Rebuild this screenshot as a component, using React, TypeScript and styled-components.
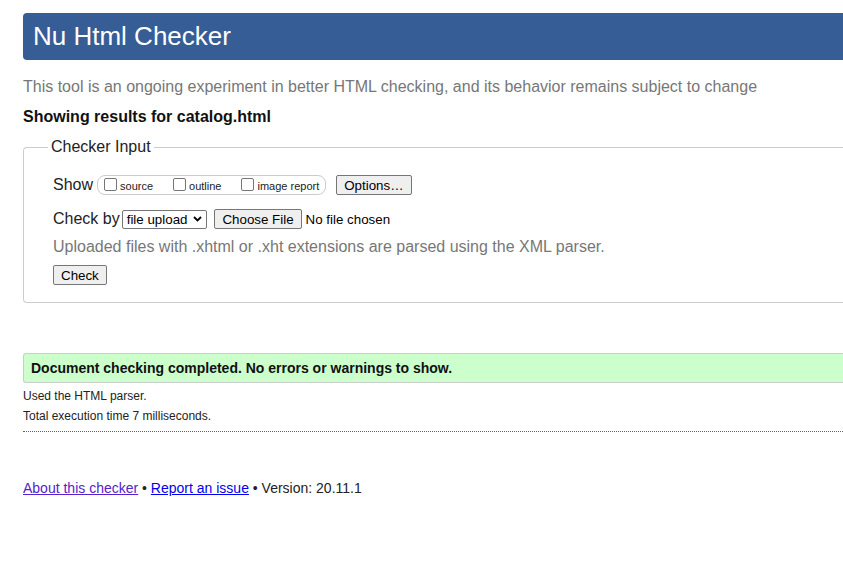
import React from "react";
import styled, { createGlobalStyle } from "styled-components";

const Global = createGlobalStyle`
  html, body { margin: 0; padding: 0; background: #fff; overflow: hidden; }
  body { font-family: "Liberation Sans", Arial, sans-serif; color: #222; }
`;

const Page = styled.div`
  width: 1000px;
  padding-left: 23px;
  padding-top: 13px;
`;

const Header = styled.h1`
  margin: 0;
  height: 47px;
  line-height: 46px;
  padding-left: 10px;
  background: #365d95;
  color: #fff;
  font-size: 26px;
  font-weight: normal;
  border-radius: 4px 0 0 4px;
`;

const Intro = styled.p`
  margin: 17px 0 0;
  font-size: 16px;
  line-height: 20px;
  color: #777;
`;

const Showing = styled.p`
  margin: 10px 0 0;
  font-size: 16px;
  line-height: 20px;
  font-weight: bold;
  color: #111;
`;

const Fieldset = styled.fieldset`
  margin: 11px 0 0;
  padding: 6px 0 17px 29px;
  border: 1px solid #ccc;
  border-right: none;
  border-radius: 4px 0 0 4px;
`;

const Legend = styled.legend`
  margin-left: -5px;
  padding: 0 3px;
  font-size: 16px;
  line-height: 18px;
  color: #222;
`;

const Row = styled.div<{ $mt?: number }>`
  display: flex;
  align-items: center;
  margin-top: ${(p) => p.$mt ?? 0}px;
  font-size: 16px;
  color: #222;
`;

const Pill = styled.span`
  display: inline-flex;
  align-items: center;
  height: 18px;
  margin-left: 4px;
  padding: 0 6px 0 6px;
  border: 1px solid #ccc;
  border-radius: 8px;
  gap: 20px;
`;

const CheckLabel = styled.label`
  display: inline-flex;
  align-items: flex-end;
  font-size: 11px;
  line-height: 12px;
  color: #222;
`;

const Box = styled.span`
  display: inline-block;
  width: 11px;
  height: 11px;
  border: 1px solid #767676;
  border-radius: 2px;
  margin-right: 3px;
  margin-bottom: 1px;
  background: #fff;
`;

const Button = styled.button<{ $ml?: number }>`
  margin: 0 0 0 ${(p) => p.$ml ?? 0}px;
  height: 20px;
  padding: 0 7px;
  font-family: "Liberation Sans", Arial, sans-serif;
  font-size: 13.33px;
  color: #000;
  background: #efefef;
  border: 1px solid #767676;
  border-radius: 2px;
`;

const Select = styled.span`
  display: inline-flex;
  align-items: center;
  margin-left: 2px;
  height: 17px;
  padding: 0 4px 0 4px;
  border: 1px solid #767676;
  border-radius: 2px;
  font-size: 13.33px;
  color: #000;
  gap: 6px;
`;

const FileNote = styled.span`
  margin-left: 4px;
  font-size: 13.33px;
  color: #000;
`;

const Hint = styled.p`
  margin: 8px 0 0;
  font-size: 16px;
  line-height: 20px;
  color: #777;
`;

const Success = styled.div`
  margin-top: 50px;
  height: 28px;
  line-height: 28px;
  padding-left: 7px;
  background: #ccffcc;
  border: 1px solid #ccc;
  border-right: none;
  border-radius: 3px 0 0 3px;
  font-size: 14px;
  font-weight: bold;
  color: #111;
`;

const Small = styled.p<{ $mt: number }>`
  margin: ${(p) => p.$mt}px 0 0;
  font-size: 12px;
  line-height: 14px;
  color: #222;
`;

const Rule = styled.hr`
  margin: 8px 0 0;
  border: none;
  border-top: 1px dotted #666;
`;

const Footer = styled.p`
  margin: 48px 0 0;
  font-size: 14px;
  line-height: 16px;
  color: #222;
`;

const Link = styled.a<{ $visited?: boolean }>`
  color: ${(p) => (p.$visited ? "#5522cc" : "#0000ee")};
  text-decoration: underline;
`;

const Chevron = () => (
  <svg width="9" height="6" viewBox="0 0 9 6">
    <path d="M1 1 L4.5 4.5 L8 1" stroke="#000" strokeWidth="1.8" fill="none" />
  </svg>
);

export default function App() {
  return (
    <>
      <Global />
      <Page>
        <Header>Nu Html Checker</Header>
        <Intro>
          This tool is an ongoing experiment in better HTML checking, and its behavior remains subject to change
        </Intro>
        <Showing>Showing results for catalog.html</Showing>
        <Fieldset>
          <Legend>Checker Input</Legend>
          <Row $mt={13}>
            Show
            <Pill>
              <CheckLabel><Box />source</CheckLabel>
              <CheckLabel><Box />outline</CheckLabel>
              <CheckLabel><Box />image report</CheckLabel>
            </Pill>
            <Button $ml={10}>Options…</Button>
          </Row>
          <Row $mt={14}>
            Check by
            <Select>file upload<Chevron /></Select>
            <Button $ml={7}>Choose File</Button>
            <FileNote>No file chosen</FileNote>
          </Row>
          <Hint>Uploaded files with .xhtml or .xht extensions are parsed using the XML parser.</Hint>
          <Row $mt={8}>
            <Button>Check</Button>
          </Row>
        </Fieldset>
        <Success>Document checking completed. No errors or warnings to show.</Success>
        <Small $mt={6}>Used the HTML parser.</Small>
        <Small $mt={6}>Total execution time 7 milliseconds.</Small>
        <Rule />
        <Footer>
          <Link href="#" $visited>About this checker</Link> • <Link href="#">Report an issue</Link> • Version: 20.11.1
        </Footer>
      </Page>
    </>
  );
}
